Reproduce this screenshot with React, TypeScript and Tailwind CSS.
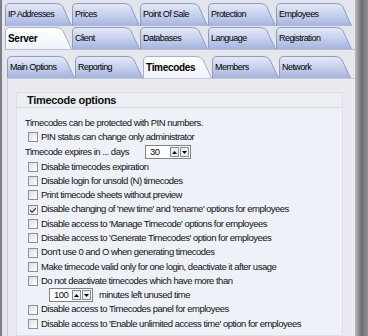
import React from 'react'

type TabDef = { label: string; w: number }

const row1: TabDef[] = [
  { label: 'IP Addresses', w: 67 },
  { label: 'Prices', w: 68 },
  { label: 'Point Of Sale', w: 68 },
  { label: 'Protection', w: 68 },
  { label: 'Employees', w: 76 },
]
const row2: TabDef[] = [
  { label: 'Server', w: 67 },
  { label: 'Client', w: 68 },
  { label: 'Databases', w: 68 },
  { label: 'Language', w: 68 },
  { label: 'Registration', w: 76 },
]
const row3: TabDef[] = [
  { label: 'Main Options', w: 68 },
  { label: 'Reporting', w: 68 },
  { label: 'Timecodes', w: 69 },
  { label: 'Members', w: 67 },
  { label: 'Network', w: 72 },
]

function Tab({ tab, h, selected, id }: { tab: TabDef; h: number; selected?: boolean; id: string }) {
  const w = tab.w
  const d = `M0.5,${h} L0.5,5 Q0.5,0.5 5,0.5 L${w - 16},0.5 Q${w - 11},0.5 ${w - 9},4 L${w - 0.5},${h}`
  return (
    <div className="relative shrink-0" style={{ width: w, height: h }}>
      <svg className="absolute inset-0" width={w} height={h}>
        <defs>
          <linearGradient id={id} x1="0" y1="0" x2="0" y2="1">
            {selected ? (
              <>
                <stop offset="0" stopColor="#ffffff" />
                <stop offset="1" stopColor="#eef2fb" />
              </>
            ) : (
              <>
                <stop offset="0" stopColor="#e6ebf8" />
                <stop offset="0.5" stopColor="#c7d0ed" />
                <stop offset="1" stopColor="#a6b3dc" />
              </>
            )}
          </linearGradient>
        </defs>
        <path d={d + ' Z'} fill={`url(#${id})`} />
        <path d={d} fill="none" stroke={selected ? '#a7b0c9' : '#8f9bc2'} strokeWidth="1" />
      </svg>
      <div
        className={`relative flex h-full items-center pl-[3px] pt-[1px] text-black ${
          selected ? 'text-[10px] font-bold tracking-[-0.3px]' : 'text-[9px] tracking-[-0.55px]'
        }`}
      >
        {tab.label}
      </div>
    </div>
  )
}

function Check({ checked }: { checked?: boolean }) {
  return (
    <div className="mr-[3px] flex h-[10px] w-[10px] shrink-0 items-center justify-center border border-[#8c8f98] bg-gradient-to-br from-[#dcdee3] to-[#ffffff]">
      {checked && (
        <svg width="8" height="8" viewBox="0 0 8 8">
          <path d="M1,3.5 L3,5.5 L7,1.5 L7,3 L3,7 L1,5 Z" fill="#1a1a1a" />
        </svg>
      )}
    </div>
  )
}

function Spin({ value, w }: { value: string; w: number }) {
  return (
    <div className="flex h-[14px] items-center border border-[#7e828c] bg-white" style={{ width: w }}>
      <div className="flex-1 pl-[4px] leading-none">{value}</div>
      <div className="mr-[1px] flex gap-[1px]">
        <div className="flex h-[10px] w-[9px] items-center justify-center border border-[#8a8d95] bg-[#eceef2]">
          <svg width="5" height="3" viewBox="0 0 5 3">
            <path d="M0,3 L2.5,0 L5,3 Z" fill="#000" />
          </svg>
        </div>
        <div className="flex h-[10px] w-[9px] items-center justify-center border border-[#8a8d95] bg-[#eceef2]">
          <svg width="5" height="3" viewBox="0 0 5 3">
            <path d="M0,0 L2.5,3 L5,0 Z" fill="#000" />
          </svg>
        </div>
      </div>
    </div>
  )
}

function Row({ label, h = 14, checked }: { label: string; h?: number; checked?: boolean }) {
  return (
    <div className="flex items-center pl-[11px]" style={{ height: h }}>
      <Check checked={checked} />
      <span>{label}</span>
    </div>
  )
}

export default function App() {
  return (
    <div
      className="flex h-[336px] w-[368px] overflow-hidden whitespace-nowrap bg-[#e2e5ec] text-[9.5px] tracking-[-0.5px] text-[#111]"
      style={{ fontFamily: '"Liberation Sans", Arial, sans-serif' }}
    >
      <div className="w-[2px] shrink-0 bg-[#7d7f84]" />
      <div className="flex w-[353px] shrink-0 flex-col pl-[3px] pt-[3px]">
        <div className="flex h-[23px]">
          {row1.map((t, i) => (
            <Tab key={t.label} tab={t} h={23} id={`r1-${i}`} />
          ))}
        </div>
        <div className="mt-[1px] flex h-[22px]">
          {row2.map((t, i) => (
            <Tab key={t.label} tab={t} h={22} selected={i === 0} id={`r2-${i}`} />
          ))}
        </div>
        <div className="flex flex-1 flex-col border-t border-[#b9c0d3] bg-[#e6e8ee] pl-[2px] pt-[6px]">
          <div className="flex h-[22px]">
            {row3.map((t, i) => (
              <Tab key={t.label} tab={t} h={22} selected={i === 2} id={`r3-${i}`} />
            ))}
          </div>
          <div className="flex-1 border-l border-t border-[#c3c8d6] bg-[#e9ebf0] pl-[8px] pr-[12px] pt-[13px]">
            <div className="h-full border border-[#dde0e8] bg-[#eef1f8]">
              <div className="flex h-[15px] items-center border-b border-[#d5d9e3] bg-[#eceef3] pl-[10px] text-[11px] font-bold tracking-[-0.3px]">
                Timecode options
              </div>
              <div className="pt-[8px]">
                <div className="flex h-[14px] items-center pl-[8px]">Timecodes can be protected with PIN numbers.</div>
                <Row label="PIN status can change only administrator" />
                <div className="flex h-[16px] items-center pl-[8px]">
                  <span className="w-[120px]">Timecode expires in ... days</span>
                  <Spin value="30" w={46} />
                </div>
                <Row label="Disable timecodes expiration" />
                <Row label="Disable login for unsold (N) timecodes" />
                <Row label="Print timecode sheets without preview" />
                <Row label="Disable changing of 'new time' and 'rename' options for employees" h={15} checked />
                <Row label="Disable access to 'Manage Timecode' options for employees" />
                <Row label="Disable access to 'Generate Timecodes' option for employees" />
                <Row label="Don't use 0 and O when generating timecodes" h={15} />
                <Row label="Make timecode valid only for one login, deactivate it after usage" />
                <Row label="Do not deactivate timecodes which have more than" />
                <div className="flex h-[14px] items-center pl-[32px]">
                  <Spin value="100" w={44} />
                  <span className="ml-[6px]">minutes left unused time</span>
                </div>
                <Row label="Disable access to Timecodes panel for employees" h={15} />
                <Row label="Disable access to 'Enable unlimited access time' option for employees" />
              </div>
            </div>
          </div>
        </div>
      </div>
      <div className="w-[13px] shrink-0 bg-gradient-to-r from-[#b9bbbf] via-[#6f7175] to-[#8e9094]" />
    </div>
  )
}
